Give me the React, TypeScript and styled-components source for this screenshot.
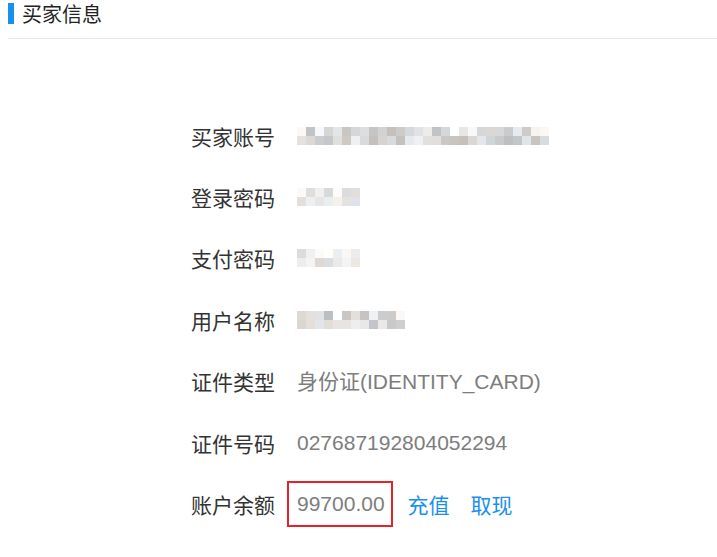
import React from 'react';
import styled, { createGlobalStyle } from 'styled-components';

const GlobalStyle = createGlobalStyle`
  html, body {
    margin: 0;
    padding: 0;
    background: #fff;
  }
  body {
    font-family: "Noto Sans CJK SC", "Liberation Sans", sans-serif;
  }
`;

const Page = styled.div`
  width: 717px;
  height: 557px;
  padding: 0 0 0 8px;
  box-sizing: border-box;
  overflow: hidden;
`;

const Header = styled.div`
  height: 39px;
  border-bottom: 1px solid #e8e8e8;
  display: flex;
  align-items: flex-start;
  padding-top: 3px;
  box-sizing: border-box;
`;

const TitleBar = styled.span`
  width: 6px;
  height: 21px;
  background: #1890f0;
  margin-right: 8px;
`;

const Title = styled.h2`
  margin: 0;
  font-size: 20px;
  font-weight: 400;
  line-height: 21px;
  color: #222;
`;

const Form = styled.div`
  margin-top: 66px;
  padding-left: 183px;
  display: flex;
  flex-direction: column;
`;

const Row = styled.div`
  height: 61.4px;
  display: flex;
  align-items: center;
`;

const Label = styled.span`
  width: 106px;
  flex: none;
  font-size: 21px;
  color: #333;
  line-height: 30px;
`;

const Value = styled.span`
  font-family: "Liberation Sans", "Noto Sans CJK SC", sans-serif;
  font-size: 21px;
  color: #7d7d7d;
  line-height: 30px;
`;

const CjkValue = styled.span`
  font-family: "Noto Sans CJK SC", sans-serif;
`;

const Balance = styled.span`
  margin-left: -10px;
  padding: 6px 6px 6px 8px;
  border: 2px solid #e3222b;
  font-family: "Liberation Sans", sans-serif;
  font-size: 21px;
  line-height: 30px;
  color: #7d7d7d;
`;

const ActionLink = styled.a<{ $gap: number }>`
  margin-left: ${p => p.$gap}px;
  font-size: 21px;
  line-height: 30px;
  color: #1890f0;
  text-decoration: none;
  cursor: pointer;
`;

// pixelated (mosaic) masked value
const Mosaic = ({ cols, seed, light }: { cols: number; seed: number; light?: boolean }) => {
  const cell = 9;
  let s = seed;
  const rand = () => {
    s = (s * 9301 + 49297) % 233280;
    return s / 233280;
  };
  const rects: JSX.Element[] = [];
  for (let r = 0; r < 2; r++) {
    for (let c = 0; c < cols; c++) {
      const base = light ? 215 : 190;
      const v = Math.round(base + rand() * (255 - base) * (r === 0 ? 1 : 0.8));
      const tint = Math.round(rand() * 10 - 5);
      rects.push(
        <rect
          key={`${r}-${c}`}
          x={c * cell}
          y={r * cell}
          width={cell}
          height={cell}
          fill={`rgb(${Math.min(255, v + tint)},${v},${Math.min(255, v - tint)})`}
        />,
      );
    }
  }
  return (
    <svg width={cols * cell} height={cell * 2} style={{ display: 'block' }}>
      {rects}
    </svg>
  );
};

export default function App() {
  return (
    <>
      <GlobalStyle />
      <Page>
        <Header>
          <TitleBar />
          <Title>买家信息</Title>
        </Header>
        <Form>
          <Row>
            <Label>买家账号</Label>
            <Mosaic cols={28} seed={17} />
          </Row>
          <Row>
            <Label>登录密码</Label>
            <Mosaic cols={7} seed={41} light />
          </Row>
          <Row>
            <Label>支付密码</Label>
            <Mosaic cols={7} seed={73} light />
          </Row>
          <Row>
            <Label>用户名称</Label>
            <Mosaic cols={12} seed={5} />
          </Row>
          <Row>
            <Label>证件类型</Label>
            <Value>
              <CjkValue>身份证</CjkValue>(IDENTITY_CARD)
            </Value>
          </Row>
          <Row>
            <Label>证件号码</Label>
            <Value>027687192804052294</Value>
          </Row>
          <Row>
            <Label>账户余额</Label>
            <Balance>99700.00</Balance>
            <ActionLink $gap={15}>充值</ActionLink>
            <ActionLink $gap={21}>取现</ActionLink>
          </Row>
        </Form>
      </Page>
    </>
  );
}
